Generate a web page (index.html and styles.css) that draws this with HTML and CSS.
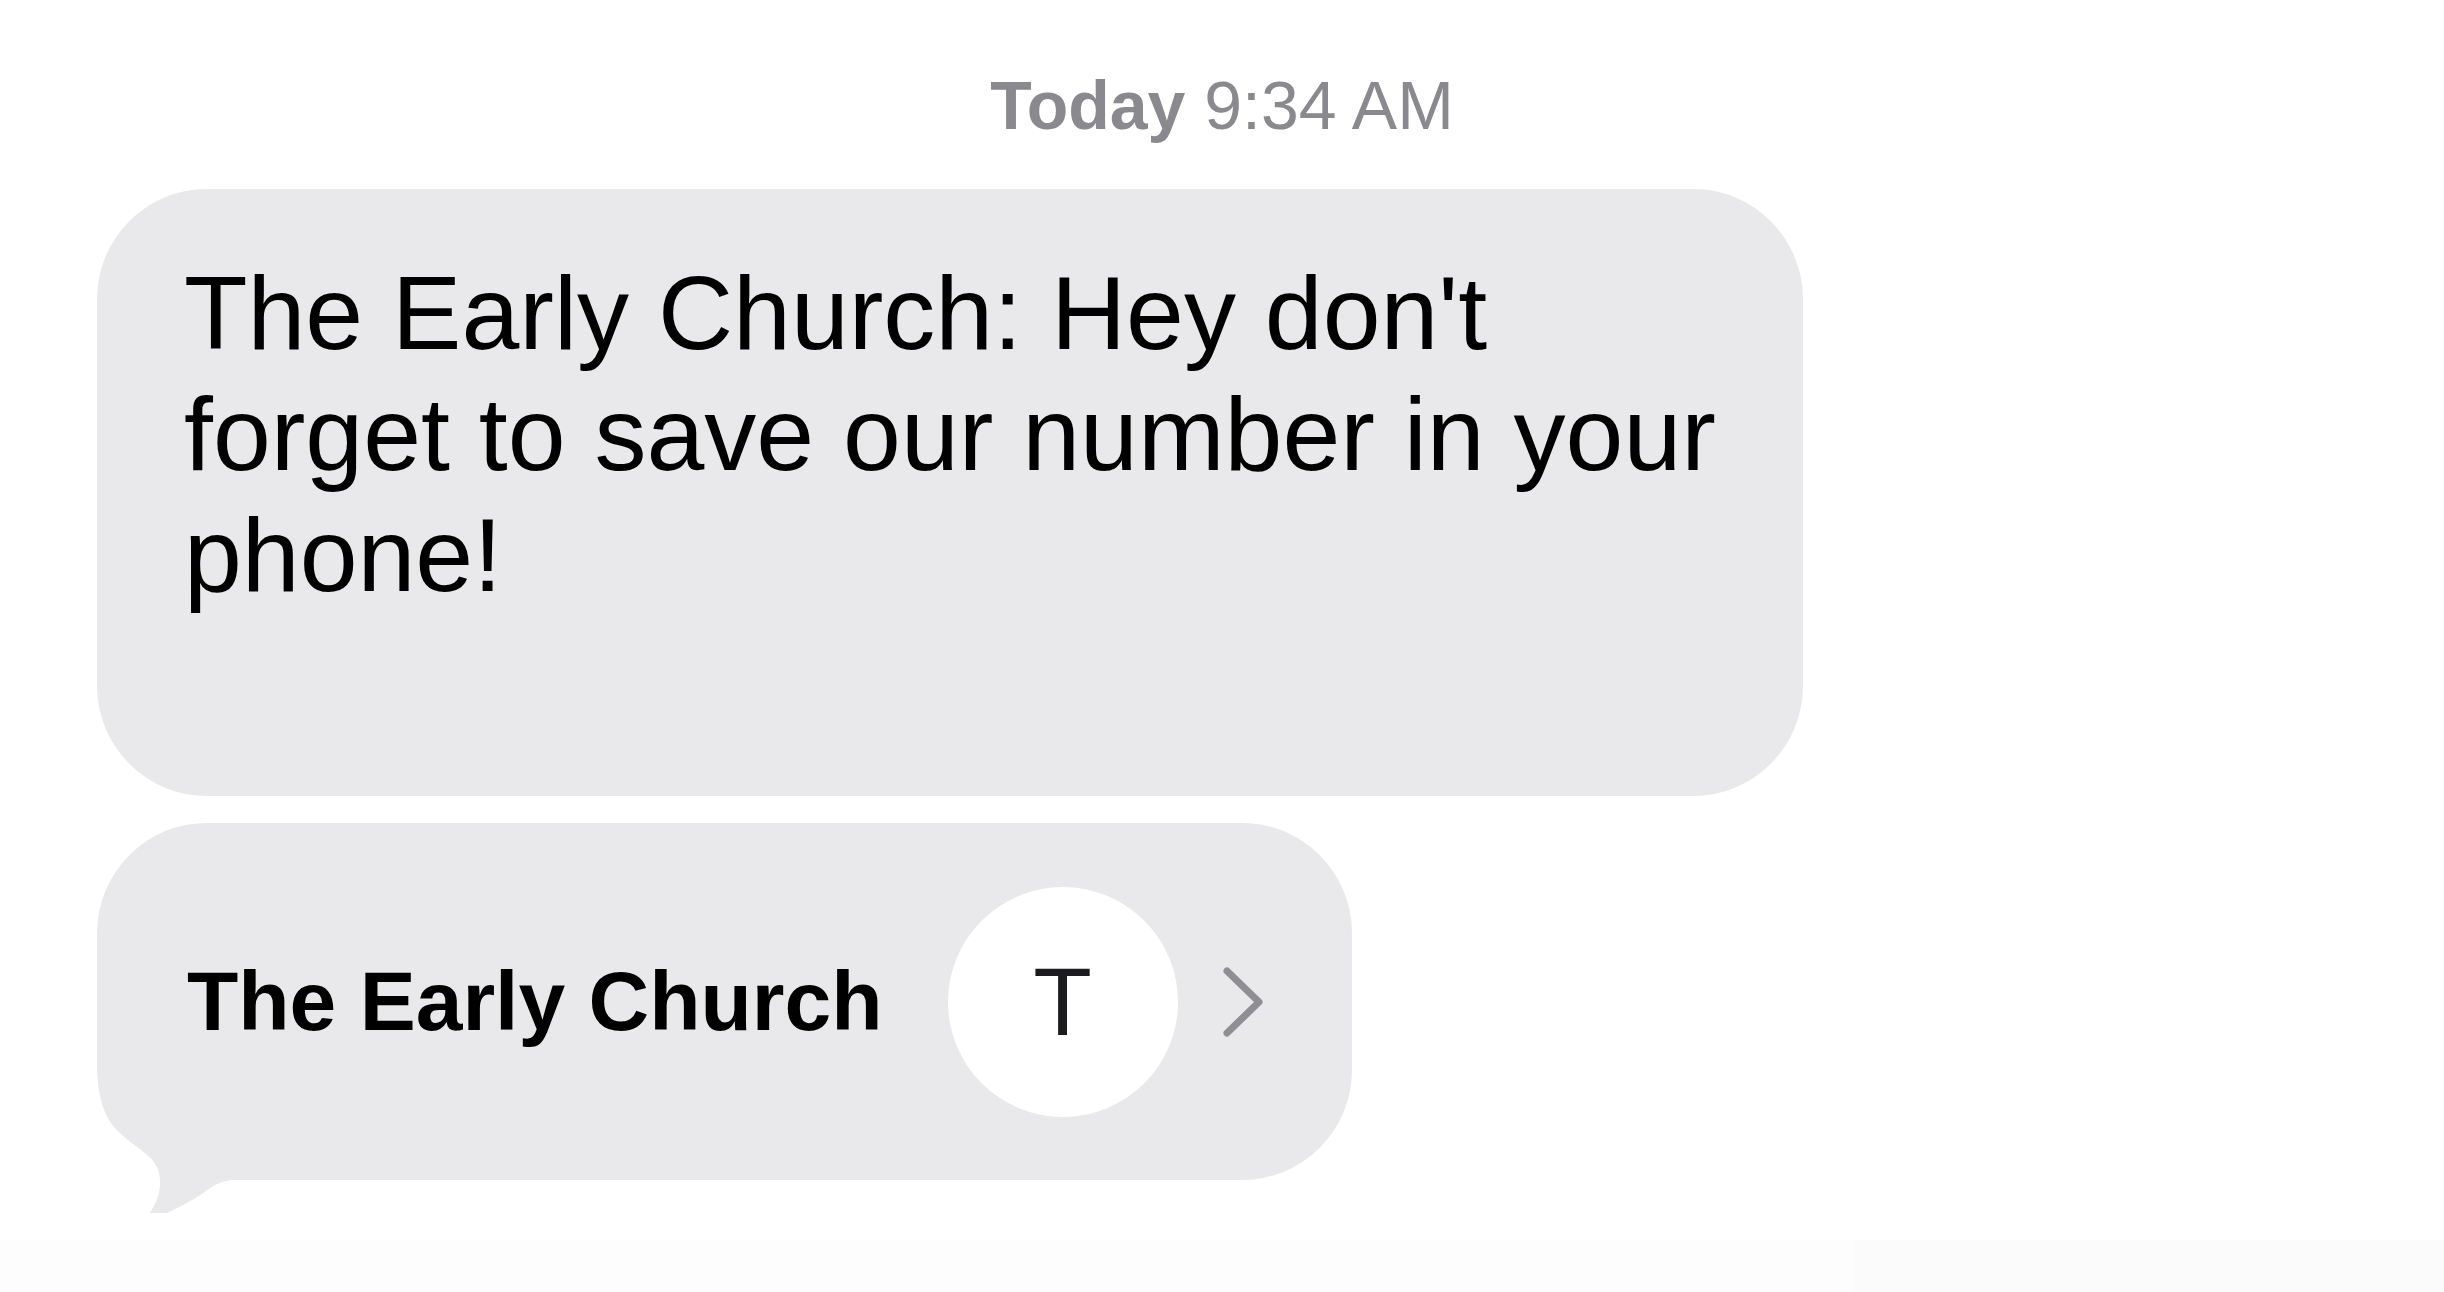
FILE: index.html
```html
<html>
    <head>
        <title>Messages</title>
        <link rel="stylesheet" href="styles.css">
    </head>
    <body>
        <div class="thread">
            <div class="stamp"><b>Today</b> 9:34 AM</div>

            <div class="bubble text">
                The Early Church: Hey don't forget to save our number in your phone!
            </div>

            <div class="bubble contact">
                <svg class="tail" width="170" height="200" viewBox="0 190 170 200">
                    <path d="M0 190 L0 240 C0 275 8 297 23 310 C38 325 58 332 62 350 C66 368 58 382 52 391 C50 395 54 397 59 395 C80 386 98 376 112 366 C122 359 128 357 140 357 L170 357 L170 190 Z" fill="#e9e9eb"/>
                </svg>
                <span class="name">The Early Church</span>
                <span class="avatar">T</span>
                <svg class="chevron" width="40" height="70" viewBox="0 0 40 70">
                    <path d="M4 4 L36 35 L4 66" fill="none" stroke="#8e8e93" stroke-width="7" stroke-linecap="round" stroke-linejoin="round"/>
                </svg>
            </div>
        </div>
        <div class="composer">
            <div class="composer-field"></div>
            <div class="composer-side"></div>
        </div>
    </body>
</html>
```

FILE: styles.css
```css
body {
    margin: 0;
    background: #fff;
    font-family: "Liberation Sans", Arial, sans-serif;
    color: #000;
    overflow: hidden;
}

.thread {
    display: flex;
    flex-direction: column;
    align-items: flex-start;
    padding-left: 97px;
    height: 1240px;
}

.stamp {
    align-self: stretch;
    margin-left: -97px;
    padding-top: 66px;
    text-align: center;
    font-size: 68px;
    line-height: 78px;
    color: #8a8a8e;
}

.stamp b {
    font-weight: bold;
}

.bubble {
    background: #e9e9eb;
    box-sizing: border-box;
}

.text {
    margin-top: 45px;
    width: 1706px;
    padding: 64px 59px 180px 87px;
    border-radius: 110px;
    font-size: 104px;
    line-height: 121px;
}

.contact {
    position: relative;
    z-index: 0;
    margin-top: 27px;
    height: 357px;
    display: flex;
    align-items: center;
    padding: 0 89px 0 90px;
    border-radius: 110px;
    border-bottom-left-radius: 160px;
}

.name {
    font-size: 84px;
    font-weight: bold;
    white-space: nowrap;
}

.avatar {
    width: 230px;
    height: 230px;
    margin-left: 65px;
    border-radius: 50%;
    background: #fff;
    display: flex;
    align-items: center;
    justify-content: center;
    font-size: 96px;
    color: #1c1c1e;
}

.chevron {
    margin-left: 45px;
    display: block;
}

.tail {
    position: absolute;
    left: 0;
    top: 190px;
    z-index: -1;
}

.composer {
    display: flex;
    height: 52px;
}

.composer-field {
    flex: 1;
    background: #fdfdfd;
}

.composer-side {
    width: 590px;
    background: #fbfbfb;
}
```
